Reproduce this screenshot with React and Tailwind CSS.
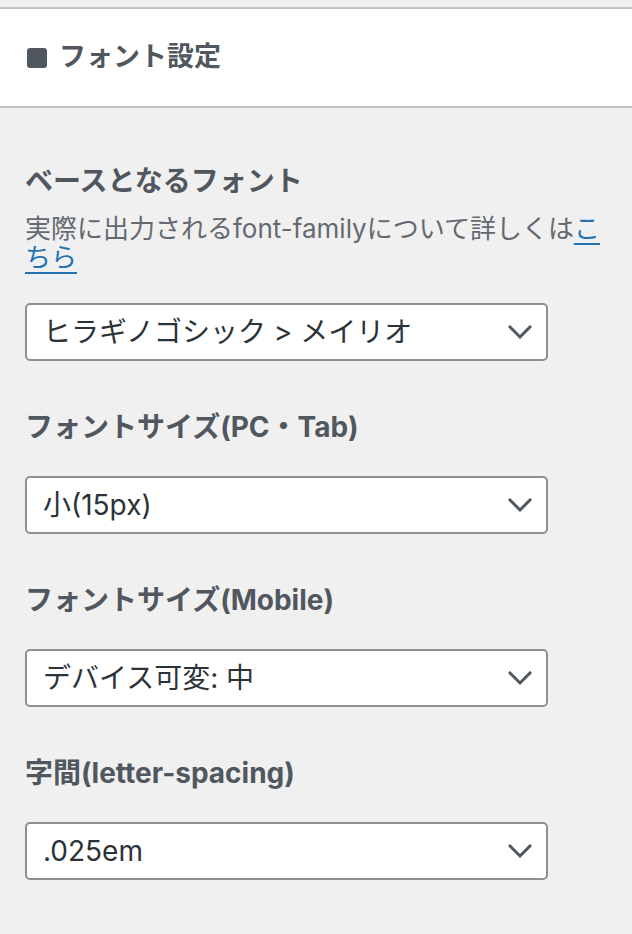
import React from "react";

const font = { fontFamily: 'Inter, "Noto Sans CJK JP", sans-serif' };

function Select({ value }) {
  return (
    <div className="mt-[31px] flex h-[58px] w-[523px] items-center justify-between rounded-[5px] border-2 border-[#8c8f94] bg-white pl-[16px] pr-[14px]">
      <span className="text-[28px] leading-none text-[#2c3338]">{value}</span>
      <svg width="24" height="15" viewBox="0 0 24 15" fill="none">
        <polyline
          points="2,2 12,12 22,2"
          stroke="#50575e"
          strokeWidth="3"
          strokeLinecap="square"
        />
      </svg>
    </div>
  );
}

function Label({ children }) {
  return (
    <div className="text-[28px] font-bold leading-[36px] text-[#50575e]">
      {children}
    </div>
  );
}

export default function App() {
  const fields = [
    { label: "フォントサイズ(PC・Tab)", value: "小(15px)" },
    { label: "フォントサイズ(Mobile)", value: "デバイス可変: 中" },
    { label: "字間(letter-spacing)", value: ".025em" },
  ];

  return (
    <div className="min-h-[934px] w-[632px] bg-[#f0f0f1]" style={font}>
      <div className="h-[7px]" />
      <div className="flex h-[101px] items-center gap-[12px] border-y-2 border-[#c3c4c7] bg-white pl-[27px]">
        <div className="h-[20px] w-[20px] rounded-[3px] bg-[#50575e]" />
        <span className="text-[27px] font-bold text-[#50575e]">フォント設定</span>
      </div>

      <div className="px-[25px] pt-[55px]">
        <Label>ベースとなるフォント</Label>
        <p className="mt-[15px] whitespace-nowrap text-[26px] leading-[29px] text-[#646970]">
          実際に出力されるfont-familyについて詳しくは
          <a className="text-[#2271b1] underline decoration-2 underline-offset-[5px]">こ</a>
          <br />
          <a className="text-[#2271b1] underline decoration-2 underline-offset-[5px]">ちら</a>
        </p>
        <Select value="ヒラギノゴシック > メイリオ" />

        {fields.map((f) => (
          <div key={f.label} className="mt-[48px]">
            <Label>{f.label}</Label>
            <Select value={f.value} />
          </div>
        ))}
      </div>
    </div>
  );
}
